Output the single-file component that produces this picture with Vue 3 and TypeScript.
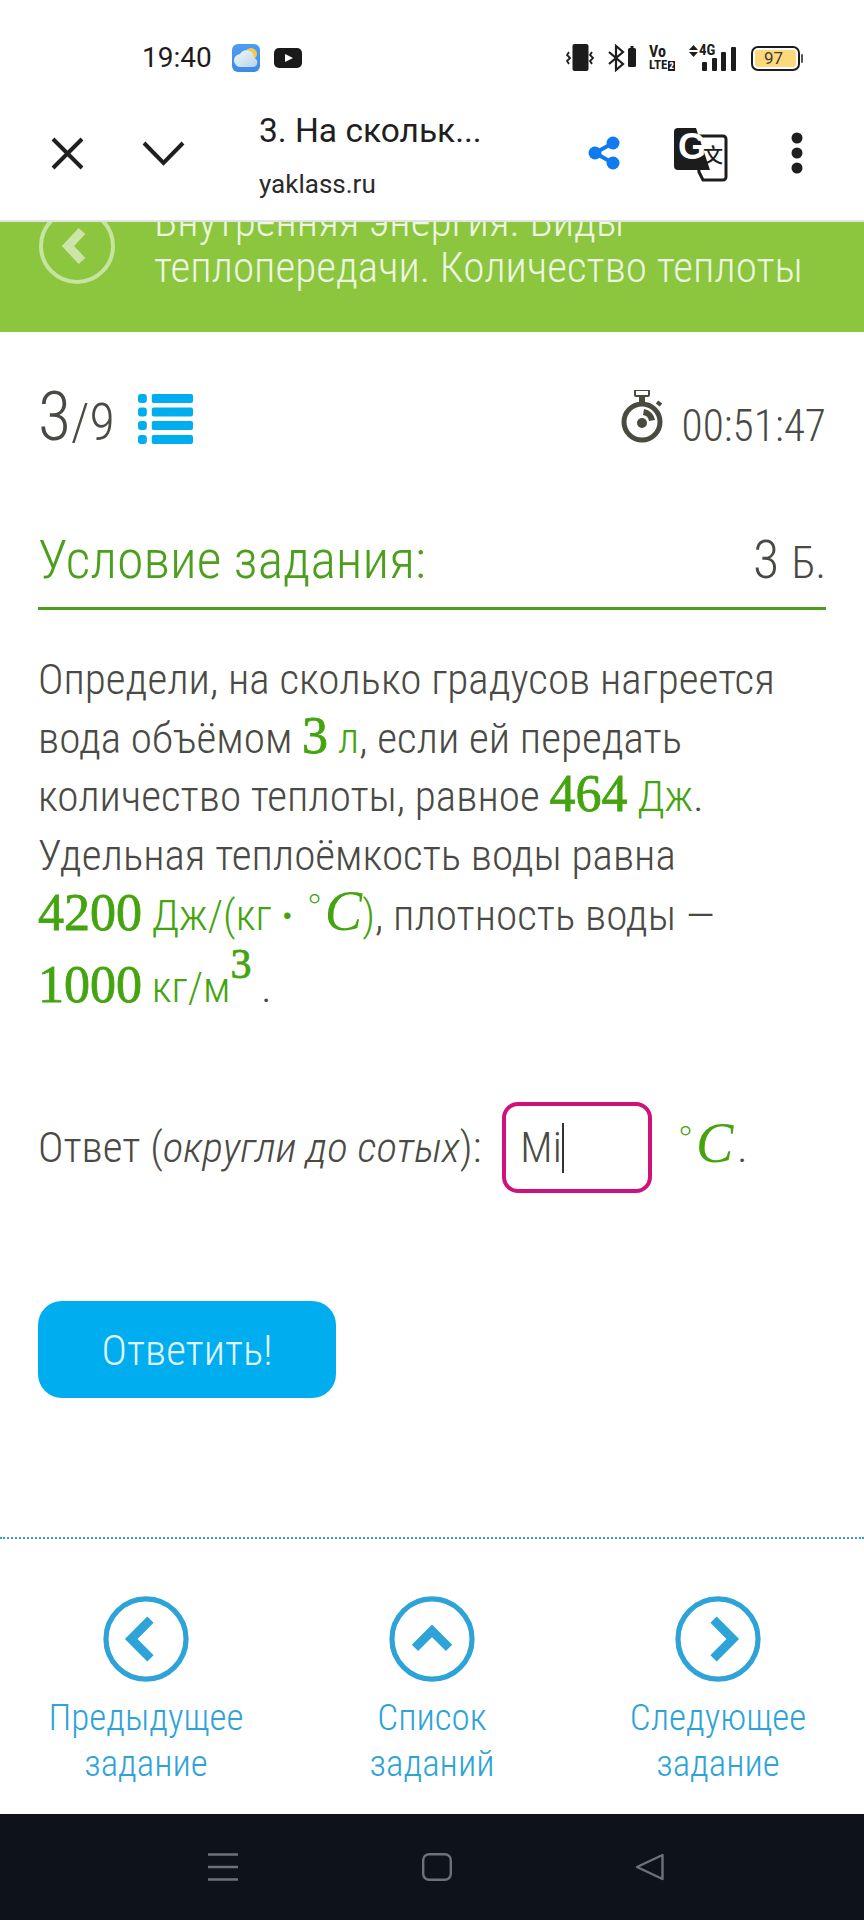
<script setup lang="ts">
interface NavItem {
  lines: string[]
  chevron: string
}

const navItems: NavItem[] = [
  { lines: ['Предыдущее', 'задание'], chevron: 'M32 16 L19 29 L32 42' },
  { lines: ['Список', 'заданий'], chevron: 'M17.500 35 L29 23.500 L40.500 35' },
  { lines: ['Следующее', 'задание'], chevron: 'M26 16 L39 29 L26 42' }
]

const bars = [
  { x: 0, h: 9 },
  { x: 10, h: 13 },
  { x: 19, h: 19 },
  { x: 29, h: 24 }
]
</script>

<template>
  <div class="page">
    <!-- status bar -->
    <div class="status">
      <span class="time">19:40</span>
      <svg class="weather" width="28" height="28" viewBox="0 0 28 28">
        <defs>
          <linearGradient id="sky" x1="0" y1="0" x2="0" y2="1">
            <stop offset="0" stop-color="#4f9df0" />
            <stop offset="1" stop-color="#3f8ae8" />
          </linearGradient>
          <linearGradient id="cloud" x1="0" y1="0" x2="1" y2="1">
            <stop offset="0" stop-color="#f4f7f6" />
            <stop offset="1" stop-color="#b5d3ee" />
          </linearGradient>
        </defs>
        <rect width="28" height="28" rx="6" fill="url(#sky)" />
        <circle cx="19" cy="10" r="6" fill="#f7c948" />
        <path d="M9 23 a6.5 6.5 0 0 1 -1 -13 a7.5 7.5 0 0 1 14 4 a4.6 4.6 0 0 1 -1 9z" fill="url(#cloud)" />
      </svg>
      <svg class="yt" width="28" height="20" viewBox="0 0 28 20">
        <rect width="28" height="20" rx="5" fill="#1a1a1a" />
        <path d="M11 6 L19 10 L11 14z" fill="#fff" />
      </svg>
      <div class="status-right">
        <svg width="29" height="28" viewBox="0 0 29 28">
          <rect x="6.500" y="0" width="16" height="27" rx="2" fill="#1c1c1c" />
          <path d="M3 8 L1 11 L4 14 L1 17 L3 20" fill="none" stroke="#1c1c1c" stroke-width="1.8" />
          <path d="M26 8 L24 11 L27 14 L24 17 L26 20" fill="none" stroke="#1c1c1c" stroke-width="1.8" />
        </svg>
        <svg class="bt" width="29" height="28" viewBox="0 0 29 28">
          <path d="M1 8 L15 20 L8 26 V2 L15 8 L1 20" fill="none" stroke="#1c1c1c" stroke-width="2.2" />
          <rect x="20" y="4" width="8" height="19" rx="1.5" fill="#1c1c1c" />
          <rect x="22.5" y="2" width="3" height="3" fill="#1c1c1c" />
        </svg>
        <div class="volte">
          <span class="vo">Vo</span>
          <span class="lte">LTE<b>2</b></span>
        </div>
        <div class="signal">
          <svg class="updown" width="9" height="12" viewBox="0 0 9 12">
            <path d="M4.5 0 L9 5 H0z M0 7 H9 L4.5 12z" fill="#1c1c1c" />
          </svg>
          <span class="net">4G</span>
          <svg class="bars" width="34" height="24" viewBox="0 0 34 24">
            <rect v-for="b in bars" :key="b.x" :x="b.x" :y="24 - b.h" width="5" :height="b.h" rx="1" fill="#1c1c1c" />
          </svg>
        </div>
        <div class="battery">
          <div class="battery-fill">97</div>
        </div>
        <div class="battery-nub"></div>
      </div>
    </div>

    <!-- custom tab toolbar -->
    <div class="toolbar">
      <svg class="tb-close" width="33" height="33" viewBox="0 0 33 33">
        <path d="M2 2 L31 31 M31 2 L2 31" stroke="#1f1f1f" stroke-width="4" />
      </svg>
      <svg class="tb-down" width="43" height="25" viewBox="0 0 43 25">
        <path d="M2 2 L21.500 22 L41 2" fill="none" stroke="#1f1f1f" stroke-width="4" />
      </svg>
      <div class="tb-title">
        <div class="tb-name">3. На скольк...</div>
        <div class="tb-host">yaklass.ru</div>
      </div>
      <svg class="tb-share" width="32" height="34" viewBox="0 0 32 34">
        <path d="M25 7 L7 17 L25 27" fill="none" stroke="#0f7bef" stroke-width="4" />
        <circle cx="25" cy="7" r="6.500" fill="#0f7bef" />
        <circle cx="7" cy="17" r="6.500" fill="#0f7bef" />
        <circle cx="25" cy="27" r="6.500" fill="#0f7bef" />
      </svg>
      <svg class="tb-translate" width="54" height="54" viewBox="0 0 54 54">
        <path d="M22 8 H49 a3 3 0 0 1 3 3 V49 a3 3 0 0 1 -3 3 H29 L25 44z" fill="#fff" stroke="#1c1c1c" stroke-width="3" />
        <path d="M4 0 H22 L36 42 H4 a4 4 0 0 1 -4 -4 V4 a4 4 0 0 1 4 -4z" fill="#1c1c1c" />
        <text x="4" y="31" class="g-letter">G</text>
        <text x="29" y="35" class="zh-letter">文</text>
      </svg>
      <svg class="tb-more" width="12" height="42" viewBox="0 0 12 42">
        <circle cx="6" cy="6" r="5.500" fill="#1f1f1f" />
        <circle cx="6" cy="21" r="5.500" fill="#1f1f1f" />
        <circle cx="6" cy="36" r="5.500" fill="#1f1f1f" />
      </svg>
    </div>

    <!-- topic band, scrolled under the toolbar -->
    <div class="band">
      <svg class="band-back" width="76" height="76" viewBox="0 0 76 76">
        <circle cx="38" cy="38" r="36" fill="none" stroke="#fff" stroke-opacity="0.5" stroke-width="4" />
        <path d="M43 23 L29 38 L43 53" fill="none" stroke="#fff" stroke-opacity="0.55" stroke-width="9" />
      </svg>
      <div class="band-text">Внутренняя энергия. Виды<br />теплопередачи. Количество теплоты</div>
    </div>

    <div class="content">
      <div class="progress">
        <div class="counter"><span class="cur">3</span><span class="tot">/9</span></div>
        <svg class="list-icon" width="55" height="50" viewBox="0 0 56 50" preserveAspectRatio="none">
          <g fill="#00aeef">
            <rect x="0" y="0" width="9" height="9" rx="3" />
            <rect x="0" y="13.500" width="9" height="9" rx="3" />
            <rect x="0" y="27" width="9" height="9" rx="3" />
            <rect x="0" y="41" width="9" height="9" rx="3" />
            <rect x="14" y="0" width="42" height="9" rx="2" />
            <rect x="14" y="13.500" width="42" height="9" rx="2" />
            <rect x="14" y="27" width="42" height="9" rx="2" />
            <rect x="14" y="41" width="42" height="9" rx="2" />
          </g>
        </svg>
        <div class="timer">
          <svg width="44" height="54" viewBox="0 0 44 54">
            <rect x="14" y="0" width="14" height="6" rx="1" fill="none" stroke="#4a4a3f" stroke-width="2" />
            <rect x="18" y="6" width="6" height="6" fill="#4a4a3f" />
            <path d="M36 12 L40 15" stroke="#4a4a3f" stroke-width="4" />
            <circle cx="21" cy="32" r="18" fill="none" stroke="#4a4a3f" stroke-width="5" />
            <circle cx="21" cy="33" r="5" fill="#4a4a3f" />
            <path d="M23 19 A13 13 0 0 1 34 30 L28 31 A7 7 0 0 0 22 25z" fill="#4a4a3f" />
          </svg>
          <span class="clock">00:51:47</span>
        </div>
      </div>

      <div class="section-head">
        <span class="section-title">Условие задания:</span>
        <span class="points">3 <small>Б.</small></span>
      </div>

      <div class="task">
        <div class="line">Определи, на сколько градусов нагреется</div>
        <div class="line">вода объёмом <b class="num">3</b> <span class="unit">л</span>, если ей передать</div>
        <div class="line">количество теплоты, равное <b class="num">464</b> <span class="unit">Дж</span>.</div>
        <div class="line">Удельная теплоёмкость воды равна</div>
        <div class="line line-mid"><b class="num">4200</b> <span class="unit">Дж/(кг <b class="dot">·</b> <sup class="deg">∘</sup><i class="var">C</i>)</span>, плотность воды —</div>
        <div class="line line-tall"><b class="num">1000</b> <span class="unit">кг/м<b class="pow">3</b></span> .</div>
      </div>

      <div class="answer">
        <span>Ответ (<i>округли до сотых</i>):</span>
        <div class="input">Mi<span class="caret"></span></div>
        <span class="answer-unit"><sup class="deg">∘</sup><i class="var">C</i><span class="end-dot">.</span></span>
      </div>

      <button class="submit" type="button">Ответить!</button>
    </div>

    <div class="pager">
      <div v-for="item in navItems" :key="item.lines[0]" class="pager-item">
        <svg width="86" height="86" viewBox="0 0 58 58">
          <circle cx="29" cy="29" r="27" fill="none" stroke="#2ea3d8" stroke-width="3.500" />
          <path :d="item.chevron" fill="none" stroke="#2ea3d8" stroke-width="6" />
        </svg>
        <div class="pager-label">
          <div v-for="l in item.lines" :key="l">{{ l }}</div>
        </div>
      </div>
    </div>

    <div class="sysnav">
      <svg width="30" height="28" viewBox="0 0 30 28">
        <path d="M0 1.500 H30 M0 14 H30 M0 26.500 H30" stroke="#6d7178" stroke-width="2.500" />
      </svg>
      <svg width="30" height="28" viewBox="0 0 30 28">
        <rect x="1.200" y="1.200" width="27.600" height="25.600" rx="6" fill="none" stroke="#6d7178" stroke-width="2.400" />
      </svg>
      <svg width="29" height="28" viewBox="0 0 29 28">
        <path d="M27.500 2 V26 L2 14z" fill="none" stroke="#6d7178" stroke-width="2.400" stroke-linejoin="round" />
      </svg>
    </div>
  </div>
</template>

<style scoped>
.page {
  width: 864px;
  height: 1920px;
  display: flex;
  flex-direction: column;
  overflow: hidden;
  background: #fff;
  font-family: Roboto, "Liberation Sans", sans-serif;
  font-weight: 300;
  font-stretch: 85%;
  color: #4a4a44;
}

/* status bar */
.status {
  height: 80px;
  flex: none;
  display: flex;
  align-items: center;
  padding: 36px 61px 0 142px;
  box-sizing: border-box;
  color: #1c1c1c;
  font-stretch: 100%;
}

.time {
  font-size: 28px;
  font-weight: 400;
  width: 90px;
  line-height: 1;
}

.yt {
  margin-left: 14px;
}

.status-right {
  margin-left: auto;
  display: flex;
  align-items: center;
}

.bt {
  margin-left: 13px;
}

.volte {
  margin-left: 12px;
  width: 29px;
  font-weight: 700;
  font-stretch: 80%;
  display: flex;
  flex-direction: column;
}

.vo {
  font-size: 16px;
  line-height: 15px;
}

.lte {
  font-size: 13px;
  line-height: 12px;
}

.lte b {
  background: #1c1c1c;
  color: #fff;
  font-size: 9px;
  padding: 0 1px;
  margin-left: 1px;
}

.signal {
  position: relative;
  margin-left: 11px;
  width: 51px;
  height: 26px;
}

.updown {
  position: absolute;
  left: 0;
  top: 0;
}

.net {
  position: absolute;
  left: 10px;
  top: -1px;
  font-size: 15px;
  font-stretch: 80%;
  font-weight: 700;
  line-height: 13px;
}

.bars {
  position: absolute;
  left: 13px;
  bottom: 0;
}

.battery {
  margin-left: 11px;
  width: 49px;
  height: 25px;
  box-sizing: border-box;
  border: 2px solid #1c1c1c;
  border-radius: 7px;
  padding: 2px;
  display: flex;
}

.battery-fill {
  flex: 1;
  background: #fdd87c;
  border-radius: 3px;
  font-size: 17px;
  font-weight: 400;
  line-height: 17px;
  text-align: center;
  padding-right: 4px;
  color: #3c3c34;
}

.battery-nub {
  width: 2px;
  height: 9px;
  margin-left: 1px;
  background: #555;
  border-radius: 1px;
}

/* toolbar */
.toolbar {
  height: 142px;
  flex: none;
  box-sizing: border-box;
  border-bottom: 2px solid #e2e2e2;
  display: flex;
  align-items: center;
  position: relative;
  font-stretch: 100%;
  color: #1f1f1f;
}

.tb-close {
  margin-left: 51px;
  margin-top: 6px;
}

.tb-down {
  margin-left: 58px;
  margin-top: 6px;
}

.tb-title {
  margin-left: 74px;
  width: 300px;
  margin-top: 10px;
}

.tb-name {
  font-size: 33.500px;
  font-weight: 400;
  line-height: 44px;
}

.tb-host {
  font-size: 26px;
  font-weight: 400;
  line-height: 34px;
  margin-top: 14px;
  color: #2a2a2a;
}

.tb-share {
  margin-left: 29px;
  margin-top: 6px;
}

.tb-translate {
  margin-left: 54px;
  margin-top: 10px;
}

.tb-more {
  margin-left: 63px;
  margin-top: 6px;
}

.g-letter {
  font-family: "Liberation Sans", sans-serif;
  font-size: 36px;
  font-weight: 700;
  fill: #fff;
}

.zh-letter {
  font-family: "Noto Sans CJK SC", sans-serif;
  font-size: 20px;
  font-weight: 500;
  fill: #1c1c1c;
}

/* green band */
.band {
  height: 110px;
  flex: none;
  background: #8cc63f;
  display: flex;
  align-items: flex-start;
  overflow: hidden;
  padding-left: 39px;
  color: rgba(255, 255, 255, 0.85);
}

.band-back {
  flex: none;
  margin-top: -14px;
}

.band-text {
  margin-left: 39px;
  margin-top: -23px;
  font-size: 43.200px;
  line-height: 46px;
  white-space: nowrap;
}

/* main */
.content {
  flex: 1;
  padding: 0 38px;
}

.progress {
  display: flex;
  align-items: flex-end;
  height: 112px;
}

.counter {
  line-height: 1;
  margin-bottom: -7px;
}

.cur {
  font-size: 68px;
}

.tot {
  font-size: 52px;
}

.list-icon {
  margin-left: 23px;
}

.timer {
  margin-left: auto;
  display: flex;
  align-items: flex-end;
  gap: 17px;
}

.clock {
  font-size: 43.500px;
  line-height: 36px;
  margin-bottom: -1px;
}

.section-head {
  margin-top: 80px;
  height: 86px;
  box-sizing: border-box;
  border-bottom: 3px solid #4c9f1c;
  display: flex;
  justify-content: space-between;
  align-items: flex-start;
  font-size: 54px;
  line-height: 72px;
}

.section-title {
  color: #4c9f1c;
}

.points small {
  font-size: 44px;
}

.task {
  margin-top: 41px;
  font-size: 43.200px;
}

.line {
  height: 58.500px;
  line-height: 58.500px;
  white-space: nowrap;
}

.line-mid {
  margin-top: 2px;
}

.line-tall {
  margin-top: 13px;
}

.num {
  font-family: "Liberation Serif", serif;
  font-size: 52px;
  font-weight: 400;
  font-stretch: 100%;
  -webkit-text-stroke: 0.8px #44a40f;
  color: #44a40f;
  line-height: 0;
}

.unit {
  color: #44a40f;
}

.dot {
  font-weight: 700;
}

.var {
  font-family: "Liberation Serif", serif;
  font-size: 56px;
  font-stretch: 100%;
  color: #44a40f;
  line-height: 0;
}

.deg {
  font-family: "DejaVu Sans", sans-serif;
  font-size: 36px;
  color: #44a40f;
  line-height: 0;
  vertical-align: 20px;
  margin-right: -1px;
}

.pow {
  font-family: "Liberation Serif", serif;
  font-size: 42px;
  font-weight: 400;
  font-stretch: 100%;
  -webkit-text-stroke: 0.8px #44a40f;
  line-height: 0;
  vertical-align: 24px;
}

.answer {
  margin-top: 85px;
  display: flex;
  align-items: center;
  font-size: 43.200px;
}

.input {
  margin-left: 21px;
  width: 150px;
  height: 91px;
  box-sizing: border-box;
  border: 4px solid #d0117d;
  border-radius: 16px;
  padding-left: 14px;
  display: flex;
  align-items: center;
}

.caret {
  width: 2px;
  height: 50px;
  background: #33332e;
}

.answer-unit {
  margin-left: 22px;
}

.end-dot {
  margin-left: 4px;
}

.submit {
  display: block;
  margin-top: 108px;
  width: 298px;
  height: 97px;
  border: none;
  border-radius: 24px;
  background: #00aeef;
  color: rgba(255, 255, 255, 0.9);
  font-family: inherit;
  font-weight: 300;
  font-stretch: 85%;
  font-size: 43px;
  padding: 0;
}

/* bottom pager */
.pager {
  flex: none;
  height: 277px;
  box-sizing: border-box;
  border-top: 2px dotted #3a9cc4;
  display: grid;
  grid-template-columns: repeat(3, 286px);
  justify-content: center;
  padding-top: 57px;
  color: #2ea3d8;
}

.pager-item {
  display: flex;
  flex-direction: column;
  align-items: center;
}

.pager-label {
  margin-top: 13px;
  font-size: 37px;
  line-height: 46px;
  text-align: center;
}

.sysnav {
  flex: none;
  height: 106px;
  background: #0e121b;
  display: flex;
  align-items: center;
  padding: 0 200px 0 208px;
  justify-content: space-between;
}
</style>
